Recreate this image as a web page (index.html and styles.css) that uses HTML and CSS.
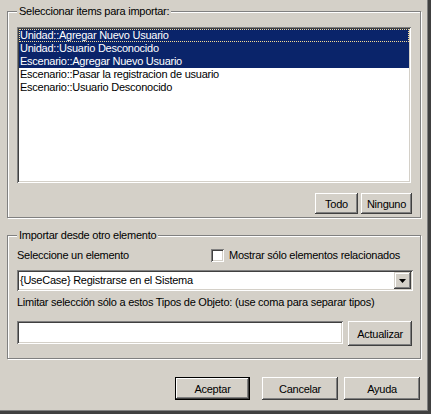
FILE: index.html
```html
<!DOCTYPE html>
<html lang="es">
<head>
    <meta charset="UTF-8">
    <meta name="viewport" content="width=device-width, initial-scale=1.0">
    <title>Importar items</title>
    <link rel="stylesheet" href="styles.css">
</head>
<body>
    <div class="dialog">
        <div class="group group_items">
            <span class="caption">Seleccionar items para importar:</span>
            <div class="listbox">
                <div class="item selected focused">Unidad::Agregar Nuevo Usuario</div>
                <div class="item selected">Unidad::Usuario Desconocido</div>
                <div class="item selected">Escenario::Agregar Nuevo Usuario</div>
                <div class="item">Escenario::Pasar la registracion de usuario</div>
                <div class="item">Escenario::Usuario Desconocido</div>
            </div>
            <div class="list_actions">
                <button class="btn" id="todo">Todo</button>
                <button class="btn" id="ninguno">Ninguno</button>
            </div>
        </div>

        <div class="group group_import">
            <span class="caption">Importar desde otro elemento</span>
            <div class="select_row">
                <span class="select_label">Seleccione un elemento</span>
                <label class="check"><span class="check_box"></span>Mostrar sólo elementos relacionados</label>
            </div>
            <div class="combo">
                <span class="combo_text">{UseCase} Registrarse en el Sistema</span>
                <span class="combo_btn">
                    <svg width="7" height="4" viewBox="0 0 7 4"><path d="M0 0h7L3.5 4z" fill="#000"/></svg>
                </span>
            </div>
            <div class="hint">Limitar selección sólo a estos Tipos de Objeto: (use coma para separar tipos)</div>
            <div class="filter_row">
                <div class="textbox"></div>
                <button class="btn" id="actualizar">Actualizar</button>
            </div>
        </div>

        <div class="footer">
            <button class="btn default" id="aceptar">Aceptar</button>
            <button class="btn" id="cancelar">Cancelar</button>
            <button class="btn" id="ayuda">Ayuda</button>
        </div>
    </div>
</body>
</html>
```

FILE: styles.css
```css
* {
    box-sizing: border-box;
}

body {
    margin: 0;
    background-color: #d4d0c8;
    font-family: "Liberation Sans", Arial, sans-serif;
    font-size: 11px;
    letter-spacing: -0.25px;
    color: #000;
}

.dialog {
    width: 431px;
    height: 414px;
    padding: 11px 0 0 7px;
    background-color: #d4d0c8;
    border-right: 3px solid #404040;
    border-bottom: 3px solid #404040;
    box-shadow: inset -1px -1px 0 #808080;
}

.group {
    position: relative;
    width: 414px;
    border: 1px solid #808080;
    box-shadow: 1px 1px 0 #fff, inset 1px 1px 0 #fff;
    padding: 0 8px 0 9px;
}

.caption {
    position: absolute;
    top: -7px;
    left: 9px;
    padding: 0 2px;
    line-height: 13px;
    background-color: #d4d0c8;
}

.group_items {
    height: 207px;
    padding-top: 15px;
}

.listbox {
    width: 394px;
    height: 156px;
    padding: 2px;
    background-color: #fff;
    box-shadow: inset 1px 1px 0 #808080, inset -1px -1px 0 #fff,
                inset 2px 2px 0 #404040, inset -2px -2px 0 #d4d0c8;
}

.item {
    height: 13px;
    line-height: 13px;
    padding-left: 1px;
    white-space: nowrap;
}

    .item.selected {
        background-color: #0a246a;
        color: #fff;
    }

    .item.focused {
        outline: 1px dotted #f5db95;
        outline-offset: -1px;
    }

.list_actions {
    display: flex;
    justify-content: flex-end;
    gap: 3px;
    margin-top: 10px;
}

.btn {
    height: 21px;
    padding: 0;
    border: 0;
    font: inherit;
    letter-spacing: inherit;
    color: #000;
    background-color: #d4d0c8;
    box-shadow: inset -1px -1px 0 #404040, inset 1px 1px 0 #fff,
                inset -2px -2px 0 #808080, inset 2px 2px 0 #d4d0c8;
}

#todo {
    width: 43px;
}

#ninguno {
    width: 51px;
}

.group_import {
    height: 124px;
    margin-top: 17px;
}

.select_row {
    display: flex;
    align-items: center;
    height: 13px;
    margin-top: 13px;
    line-height: 13px;
}

.select_label {
    flex: 0 0 194px;
}

.check {
    display: flex;
    align-items: center;
    gap: 5px;
}

.check_box {
    width: 13px;
    height: 13px;
    background-color: #fff;
    box-shadow: inset 1px 1px 0 #808080, inset -1px -1px 0 #fff,
                inset 2px 2px 0 #404040, inset -2px -2px 0 #d4d0c8;
}

.combo {
    display: flex;
    align-items: center;
    width: 396px;
    height: 21px;
    margin-top: 8px;
    padding: 2px;
    background-color: #fff;
    box-shadow: inset 1px 1px 0 #808080, inset -1px -1px 0 #fff,
                inset 2px 2px 0 #404040, inset -2px -2px 0 #d4d0c8;
}

.combo_text {
    flex: 1;
    padding-left: 1px;
    line-height: 13px;
}

.combo_btn {
    display: flex;
    align-items: center;
    justify-content: center;
    width: 17px;
    height: 17px;
    background-color: #d4d0c8;
    box-shadow: inset -1px -1px 0 #404040, inset 1px 1px 0 #d4d0c8,
                inset -2px -2px 0 #808080, inset 2px 2px 0 #fff;
}

.hint {
    margin-top: 5px;
    line-height: 13px;
    white-space: nowrap;
}

.filter_row {
    display: flex;
    align-items: flex-start;
    margin-top: 12px;
}

.textbox {
    width: 327px;
    height: 23px;
    background-color: #fff;
    box-shadow: inset 1px 1px 0 #808080, inset -1px -1px 0 #fff,
                inset 2px 2px 0 #404040, inset -2px -2px 0 #d4d0c8;
}

#actualizar {
    width: 64px;
    height: 25px;
    margin-left: 5px;
}

.footer {
    display: flex;
    justify-content: flex-end;
    width: 414px;
    margin-top: 18px;
    padding-right: 1px;
}

    .footer .btn {
        width: 76px;
        height: 23px;
    }

#aceptar {
    width: 75px;
    margin-right: 12px;
}

#cancelar {
    margin-right: 6px;
}

.btn.default {
    box-shadow: inset 0 0 0 1px #000,
                inset -2px -2px 0 #404040, inset 2px 2px 0 #fff,
                inset -3px -3px 0 #808080, inset 3px 3px 0 #d4d0c8;
}
```
